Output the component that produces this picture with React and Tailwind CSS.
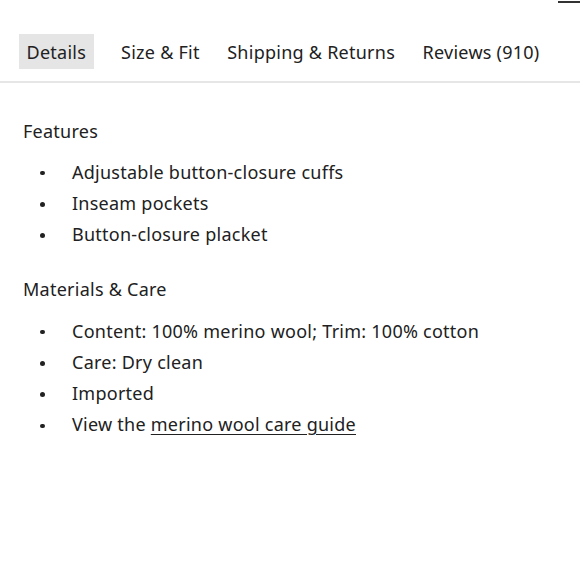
const tabs = ["Details", "Size & Fit", "Shipping & Returns", "Reviews (910)"];

const features = [
  "Adjustable button-closure cuffs",
  "Inseam pockets",
  "Button-closure placket",
];

const Bullet = ({ children }) => (
  <li className="flex items-center h-[31.3px]">
    <span className="w-[49px] pl-[17px] flex items-center">
      <span className="block w-[4.5px] h-[4.5px] rounded-full bg-[#212121] mt-[3px]" />
    </span>
    <span>{children}</span>
  </li>
);

const App = () => {
  return (
    <div
      className="relative w-[580px] h-[580px] bg-white text-[#212121] text-[18px] leading-[26px] tracking-[0.25px]"
      style={{ fontFamily: "'Noto Sans', sans-serif" }}
    >
      <div className="absolute right-0 top-[1px] w-[22px] h-[2px] bg-[#333]" />
      <div className="flex items-center gap-[27.5px] pl-[19px] pt-[34px] pb-[12px] border-b-2 border-[#e6e6e6]">
        {tabs.map((t, i) => (
          <div
            key={t}
            className={
              i === 0
                ? "bg-[#e5e5e5] h-[35px] px-[7.5px] pt-[1px] flex items-center"
                : "h-[35px] pt-[1px] flex items-center"
            }
          >
            {t}
          </div>
        ))}
      </div>
      <div className="pl-[23px]">
        <h3 className="mt-[35px] h-[26px] flex items-center">Features</h3>
        <ul className="mt-[12px]">
          {features.map((f) => (
            <Bullet key={f}>{f}</Bullet>
          ))}
        </ul>
        <h3 className="mt-[26px] h-[26px] flex items-center">Materials &amp; Care</h3>
        <ul className="mt-[13px]">
          <Bullet>Content: 100% merino wool; Trim: 100% cotton</Bullet>
          <Bullet>Care: Dry clean</Bullet>
          <Bullet>Imported</Bullet>
          <Bullet>
            View the{" "}
            <a className="underline underline-offset-[3px]" href="#">
              merino wool care guide
            </a>
          </Bullet>
        </ul>
      </div>
    </div>
  );
};

export default App;
